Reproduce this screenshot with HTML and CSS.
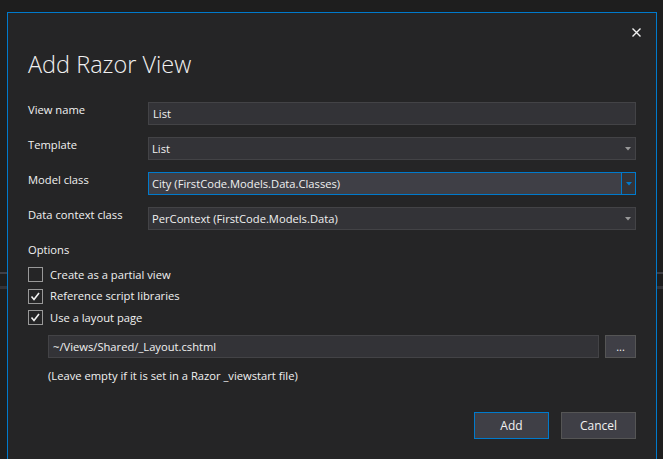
FILE: index.html
```html
<!DOCTYPE html>
<html>
<head>
<meta charset="utf-8">
<title>Add Razor View</title>
<link rel="stylesheet" href="styles.css">
</head>
<body>
<div class="dialog">
  <div class="close-row">
    <button class="close" aria-label="Close">
      <svg width="9" height="9" viewBox="0 0 9 9"><path d="M0.5 0.5L8.5 8.5M8.5 0.5L0.5 8.5" stroke="#f1f1f1" stroke-width="1.4" fill="none"/></svg>
    </button>
  </div>
  <h1 class="title">Add Razor View</h1>
  <div class="form">
    <div class="label">View name</div>
    <div class="field text"><span class="value">List</span></div>

    <div class="label">Template</div>
    <div class="field combo"><span class="value">List</span><span class="drop"><svg width="6" height="4" viewBox="0 0 6 4"><path d="M0 0H6L3 3.5Z" fill="#999999"/></svg></span></div>

    <div class="label">Model class</div>
    <div class="field combo focus"><span class="value">City (FirstCode.Models.Data.Classes)</span><span class="drop"><svg width="6" height="4" viewBox="0 0 6 4"><path d="M0 0H6L3 3.5Z" fill="#007acc"/></svg></span></div>

    <div class="label">Data context class</div>
    <div class="field combo"><span class="value">PerContext (FirstCode.Models.Data)</span><span class="drop"><svg width="6" height="4" viewBox="0 0 6 4"><path d="M0 0H6L3 3.5Z" fill="#999999"/></svg></span></div>
  </div>

  <div class="options-label">Options</div>
  <div class="checks">
    <div class="check"><span class="box"></span><span>Create as a partial view</span></div>
    <div class="check"><span class="box"><svg width="13" height="13" viewBox="0 0 13 13"><path d="M2.5 6.5L5 9.5L10 3" stroke="#f1f1f1" stroke-width="1.6" fill="none"/></svg></span><span>Reference script libraries</span></div>
    <div class="check"><span class="box"><svg width="13" height="13" viewBox="0 0 13 13"><path d="M2.5 6.5L5 9.5L10 3" stroke="#f1f1f1" stroke-width="1.6" fill="none"/></svg></span><span>Use a layout page</span></div>
  </div>

  <div class="layout-row">
    <div class="field text grow"><span class="value">~/Views/Shared/_Layout.cshtml</span></div>
    <button class="browse">...</button>
  </div>
  <div class="hint">(Leave empty if it is set in a Razor _viewstart file)</div>

  <div class="actions">
    <button class="btn primary">Add</button>
    <button class="btn">Cancel</button>
  </div>
</div>
</body>
</html>
```

FILE: styles.css
```css
* {
  box-sizing: border-box;
}

html,
body {
  margin: 0;
  height: 100%;
}

body {
  background-color: #1e1e1e;
  background-image: linear-gradient(#3f3f46, #3f3f46), linear-gradient(#333337, #333337);
  background-size: 100% 2px, 100% 3px;
  background-position: 0 272px, 0 286px;
  background-repeat: no-repeat;
  font-family: "Open Sans", "Noto Sans", sans-serif;
  font-size: 11.2px;
  line-height: 16px;
  color: #f1f1f1;
  overflow: hidden;
}

.dialog {
  margin: 12px 0 0 7px;
  width: 650px;
  height: 460px;
  background: #252526;
  border: 1px solid #007acc;
  border-bottom: none;
  padding: 0 20px;
}

.close-row {
  display: flex;
  justify-content: flex-end;
  padding-top: 15px;
  margin-right: -5px;
}

.close {
  display: block;
  width: 9px;
  height: 9px;
  padding: 0;
  margin: 0;
  border: 0;
  background: none;
}

.close svg {
  display: block;
}

.title {
  margin: 12px 0 0;
  font-size: 23.5px;
  font-weight: 300;
  line-height: 30px;
  color: #f1f1f1;
}

.form {
  display: grid;
  grid-template-columns: 120px 1fr;
  row-gap: 12px;
  margin-top: 23px;
}

.label {
  line-height: 16px;
}

.field {
  height: 23px;
  background: #333337;
  border: 1px solid #434346;
  display: flex;
  align-items: center;
  padding: 0 0 0 4px;
  white-space: nowrap;
}

.combo {
  padding-left: 3px;
}

.value {
  flex: 1;
}

.drop {
  width: 14px;
  align-self: stretch;
  display: flex;
  align-items: center;
  justify-content: center;
}

.drop svg {
  display: block;
}

.combo.focus {
  border-color: #007acc;
  background: #3f3f46;
}

.combo.focus .drop {
  border-left: 1px solid #007acc;
  background: #333337;
}

.options-label {
  margin-top: 12px;
}

.checks {
  margin-top: 9px;
  display: flex;
  flex-direction: column;
  gap: 6.5px;
}

.check {
  display: flex;
  align-items: center;
  gap: 7px;
  height: 15px;
}

.box {
  width: 15px;
  height: 15px;
  border: 1px solid #999999;
  display: flex;
  align-items: center;
  justify-content: center;
}

.box svg {
  display: block;
}

.layout-row {
  display: flex;
  gap: 6px;
  margin: 10px 0 0 20px;
}

.grow {
  flex: 1;
}

.browse {
  width: 31px;
  height: 23px;
  background: #3f3f46;
  border: 1px solid #555555;
  color: #f1f1f1;
  font-family: inherit;
  font-size: 11px;
  line-height: 16px;
  padding: 0;
}

.hint {
  margin: 10px 0 0 20px;
}

.actions {
  display: flex;
  justify-content: flex-end;
  gap: 12px;
  margin-top: 28px;
}

.btn {
  width: 75px;
  height: 27px;
  background: #3f3f46;
  border: 1px solid #555555;
  color: #f1f1f1;
  font-family: inherit;
  font-size: 12px;
  padding: 0;
}

.btn.primary {
  border-color: #007acc;
}
```
